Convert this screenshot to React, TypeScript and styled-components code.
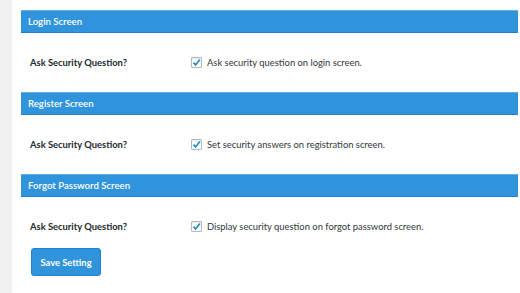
import styled, { createGlobalStyle } from "styled-components";

const GlobalStyle = createGlobalStyle`
  html, body {
    margin: 0;
    padding: 0;
    background: #f1f1f1;
  }
  body {
    font-family: Lato, "Open Sans", "Liberation Sans", sans-serif;
    color: #23282d;
  }
`;

const Page = styled.div`
  margin-left: 12px;
  height: 293px;
  background: #ffffff;
  padding: 10px 2px 0 9px;
  box-sizing: border-box;
  overflow: hidden;
`;

const SectionHeader = styled.div`
  height: 23px;
  box-sizing: border-box;
  display: flex;
  align-items: center;
  padding-left: 7px;
  background: #2f94dc;
  border-top: 1px solid #62aee6;
  border-bottom: 1px solid #2182cb;
  color: #ffffff;
  font-size: 9.6px;
  font-weight: 600;
`;

const Row = styled.div<{ $last?: boolean }>`
  height: ${(p) => (p.$last ? 37 : 59)}px;
  box-sizing: border-box;
  padding-top: 22px;
  display: flex;
  align-items: flex-start;
`;

const Label = styled.div`
  width: 170px;
  padding-left: 9px;
  box-sizing: border-box;
  font-size: 9.4px;
  font-weight: 700;
  line-height: 15px;
`;

const CheckLabel = styled.label`
  display: flex;
  align-items: center;
  gap: 5px;
  font-size: 9.4px;
  line-height: 15px;
  color: #32373c;
`;

const CheckBox = styled.span`
  width: 11px;
  height: 11px;
  box-sizing: border-box;
  border: 1px solid #b4b9be;
  border-radius: 1px;
  background: #fff;
  box-shadow: inset 0 1px 2px rgba(0, 0, 0, 0.1);
  display: flex;
  align-items: center;
  justify-content: center;
`;

const SaveButton = styled.button`
  margin: 14px 0 0 10px;
  width: 70px;
  height: 28px;
  background: #2f94dc;
  border: 1px solid #2183cc;
  border-radius: 3px;
  color: #ffffff;
  font-family: inherit;
  font-size: 9.4px;
  font-weight: 700;
  padding: 0;
`;

const Check = () => (
  <svg width="9" height="9" viewBox="0 0 9 9">
    <path d="M1.5 4.6 L3.6 6.9 L7.8 1.6" fill="none" stroke="#1e8cbe" strokeWidth="1.6" />
  </svg>
);

const sections = [
  { title: "Login Screen", text: "Ask security question on login screen." },
  { title: "Register Screen", text: "Set security answers on registration screen." },
  { title: "Forgot Password Screen", text: "Display security question on forgot password screen." },
];

const App = () => {
  return (
    <>
      <GlobalStyle />
      <Page>
        {sections.map((s, i) => (
          <div key={s.title}>
            <SectionHeader>{s.title}</SectionHeader>
            <Row $last={i === sections.length - 1}>
              <Label>Ask Security Question?</Label>
              <CheckLabel>
                <CheckBox>
                  <Check />
                </CheckBox>
                {s.text}
              </CheckLabel>
            </Row>
          </div>
        ))}
        <SaveButton>Save Setting</SaveButton>
      </Page>
    </>
  );
};

export default App;
